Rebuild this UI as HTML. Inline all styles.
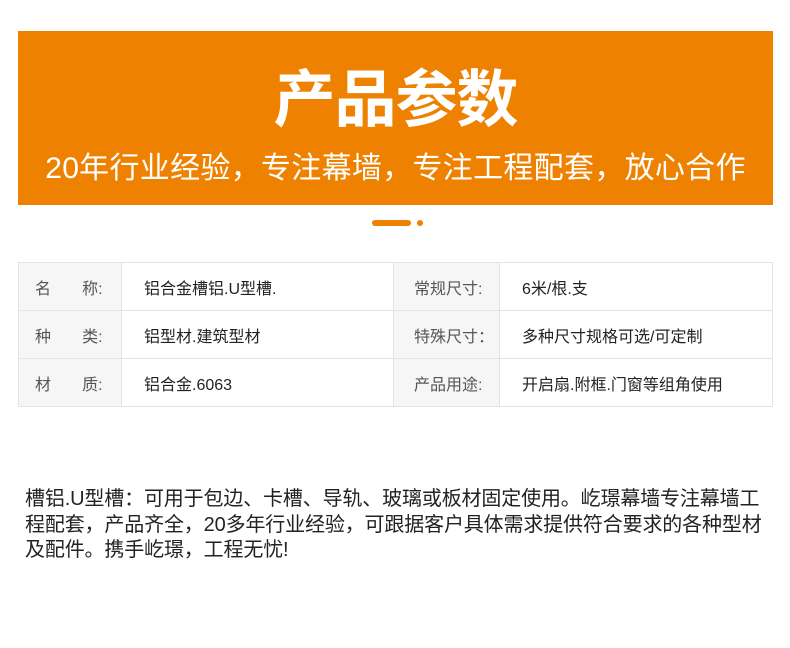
<!DOCTYPE html>
<html><head><meta charset="utf-8"><style>
*{margin:0;padding:0;box-sizing:border-box}
body{width:790px;height:648px;background:#fff;font-family:"Liberation Sans","Noto Sans CJK SC",sans-serif;position:relative;overflow:hidden}
.banner{position:absolute;left:18px;top:31px;width:755px;height:174px;background:#ee8200;color:#fff;text-align:center}
.t1{position:absolute;left:0;right:0;top:37px;font-size:62px;font-weight:bold;line-height:66px;letter-spacing:-1px}
.t2{position:absolute;left:0;right:0;top:120px;font-size:30px;line-height:36px;letter-spacing:0.3px}
.pill{position:absolute;left:372px;top:220px;width:39px;height:6px;border-radius:3px;background:#ee8200}
.dot{position:absolute;left:417px;top:220px;width:6px;height:6px;border-radius:3px;background:#ee8200}
table{position:absolute;left:18px;top:262px;width:755px;border-collapse:collapse;font-size:16px}
td{border:1px solid #e4e4e4;height:48px;vertical-align:middle}
td.l{background:#f6f6f6;color:#555}
td.v{color:#222;padding-left:22px}
td.l1{width:103px;padding-left:16px}
td.l2{width:106px;padding-left:20px}
td.v1{width:272px}
.p{position:absolute;left:25px;top:487px;font-size:20px;line-height:25.5px;color:#222;white-space:nowrap;letter-spacing:-0.15px}
</style></head><body>
<div class="banner"><div class="t1">产品参数</div><div class="t2">20年行业经验，专注幕墙，专注工程配套，放心合作</div></div>
<div class="pill"></div><div class="dot"></div>
<table>
<tr><td class="l l1">名&nbsp;&nbsp;&nbsp;&nbsp;&nbsp;&nbsp;&nbsp;称:</td><td class="v v1">铝合金槽铝.U型槽.</td><td class="l l2">常规尺寸:</td><td class="v">6米/根.支</td></tr>
<tr><td class="l l1">种&nbsp;&nbsp;&nbsp;&nbsp;&nbsp;&nbsp;&nbsp;类:</td><td class="v v1">铝型材.建筑型材</td><td class="l l2">特殊尺寸：</td><td class="v">多种尺寸规格可选/可定制</td></tr>
<tr><td class="l l1">材&nbsp;&nbsp;&nbsp;&nbsp;&nbsp;&nbsp;&nbsp;质:</td><td class="v v1">铝合金.6063</td><td class="l l2">产品用途:</td><td class="v">开启扇.附框.门窗等组角使用</td></tr>
</table>
<div class="p">槽铝.U型槽：可用于包边、卡槽、导轨、玻璃或板材固定使用。屹璟幕墙专注幕墙工<br>程配套，产品齐全，20多年行业经验，可跟据客户具体需求提供符合要求的各种型材<br>及配件。携手屹璟，工程无忧!</div>
</body></html>
